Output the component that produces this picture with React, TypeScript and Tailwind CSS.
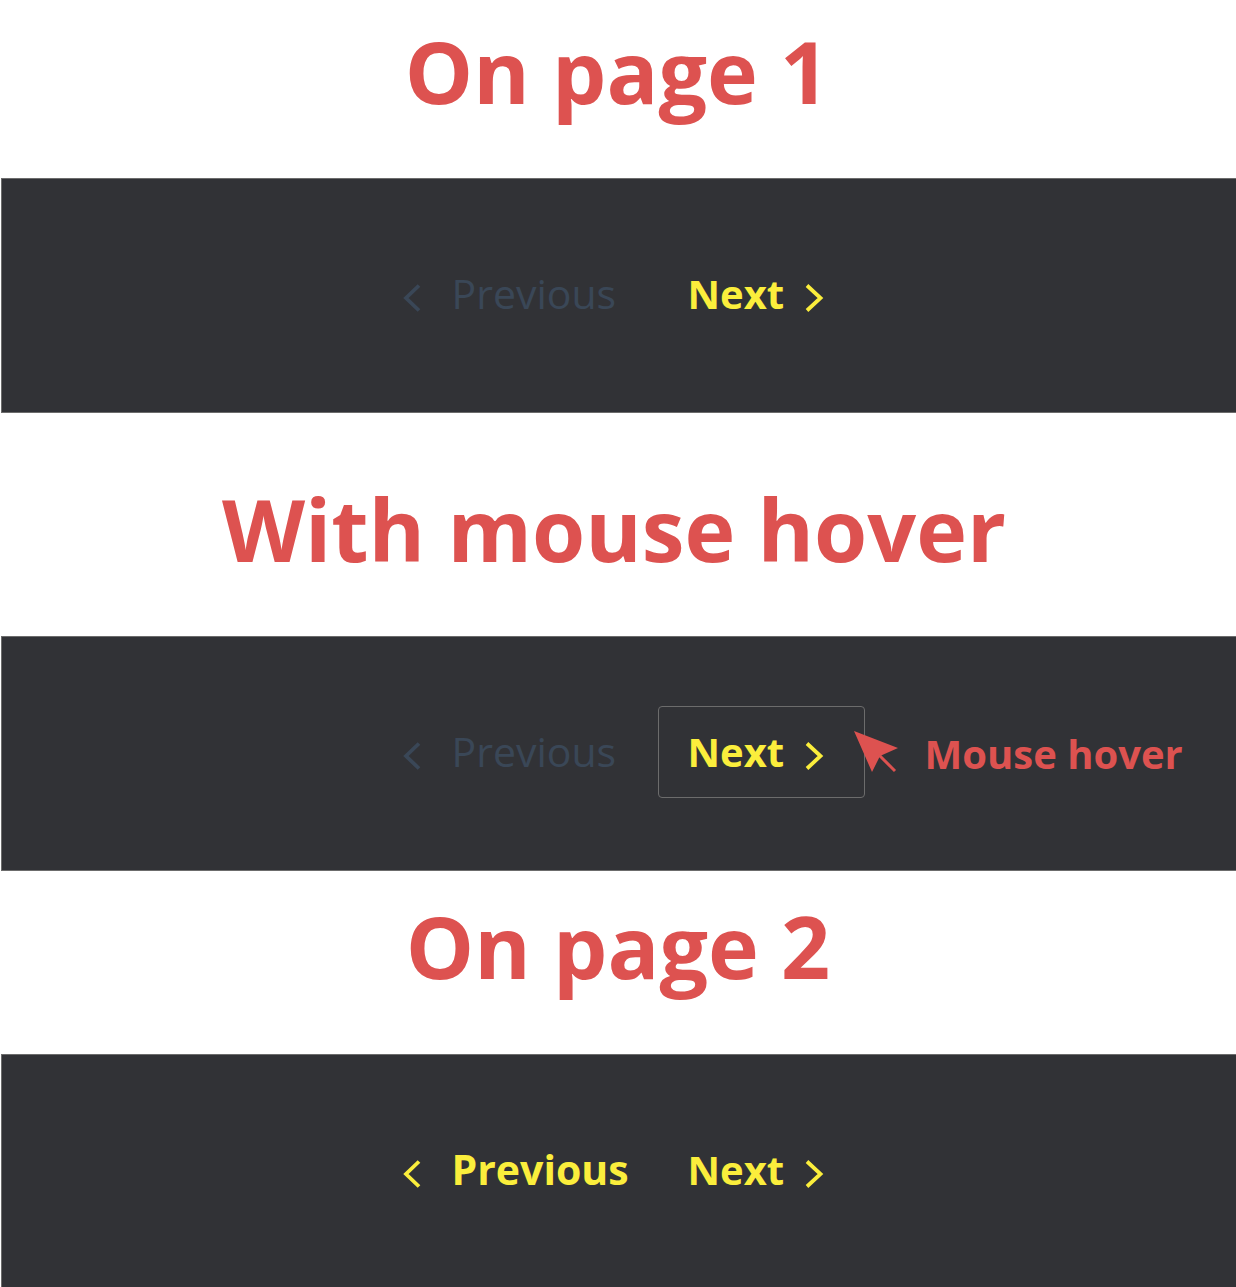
import React from 'react'

const RED = 'text-[#dd5250]'

function Chevron({ dir, className }: { dir: 'left' | 'right'; className?: string }) {
  return (
    <svg viewBox="0 0 20 28" className={className} fill="none">
      <polyline
        points={dir === 'left' ? '17,1.5 4,14 17,26.5' : '3,1.5 16.5,14 3,26.5'}
        stroke="currentColor"
        strokeWidth="3.8"
        strokeLinejoin="miter"
      />
    </svg>
  )
}

function Cursor() {
  return (
    <svg viewBox="0 0 45 42" className="w-[45px] h-[42px] shrink-0 text-[#dd5250]">
      <polygon points="0,0 44,17 26,25 18,41" fill="currentColor" />
      <line x1="24" y1="23" x2="41" y2="40" stroke="currentColor" strokeWidth="3" />
    </svg>
  )
}

function Pager({ page, hover }: { page: 1 | 2; hover?: boolean }) {
  const prevActive = page === 2
  return (
    <div className="ml-px h-[235px] pb-[4px] pr-[2px] border-y border-l border-[#6c6c6c] bg-[#313236] flex items-center justify-center">
      <div className="flex items-center">
        <div
          className={`w-[286px] pl-[30px] flex items-center gap-[30px] ${
            prevActive ? 'text-[#fbee3c] font-bold' : 'text-[#3a4757] font-normal'
          }`}
        >
          <Chevron dir="left" className="w-[20px] h-[28px] mt-[8px]" />
          <span className="text-[41px] leading-none">Previous</span>
        </div>
        <div
          className={`relative w-[207px] h-[92px] pl-[29px] flex items-center gap-[20px] rounded-[4px] border text-[#fbee3c] ${
            hover ? 'border-[#6c6c6c]' : 'border-transparent'
          }`}
        >
          <span className="text-[40px] leading-none font-bold">Next</span>
          <Chevron dir="right" className="w-[20px] h-[28px] mt-[8px]" />
          {hover && (
            <div className="absolute left-[195px] top-0 h-full flex items-center gap-[26px] whitespace-nowrap">
              <Cursor />
              <span className={`text-[40px] leading-none font-bold mt-[5px] ${RED}`}>Mouse hover</span>
            </div>
          )}
        </div>
      </div>
    </div>
  )
}

function Heading({ children, className }: { children: React.ReactNode; className: string }) {
  return (
    <div className={`flex justify-center ${className}`}>
      <h1 className={`text-[86px] leading-none font-bold ${RED}`}>{children}</h1>
    </div>
  )
}

export default function App() {
  return (
    <div className="w-[1236px] h-[1287px] overflow-hidden bg-white" style={{ fontFamily: '"Open Sans", sans-serif' }}>
      <Heading className="h-[178px] pt-[28px] pr-[2px]">On page 1</Heading>
      <Pager page={1} />
      <Heading className="h-[223px] pt-[73px] pr-[8px]">With mouse hover</Heading>
      <Pager page={1} hover />
      <Heading className="h-[183px] pt-[32px]">On page 2</Heading>
      <Pager page={2} />
    </div>
  )
}
